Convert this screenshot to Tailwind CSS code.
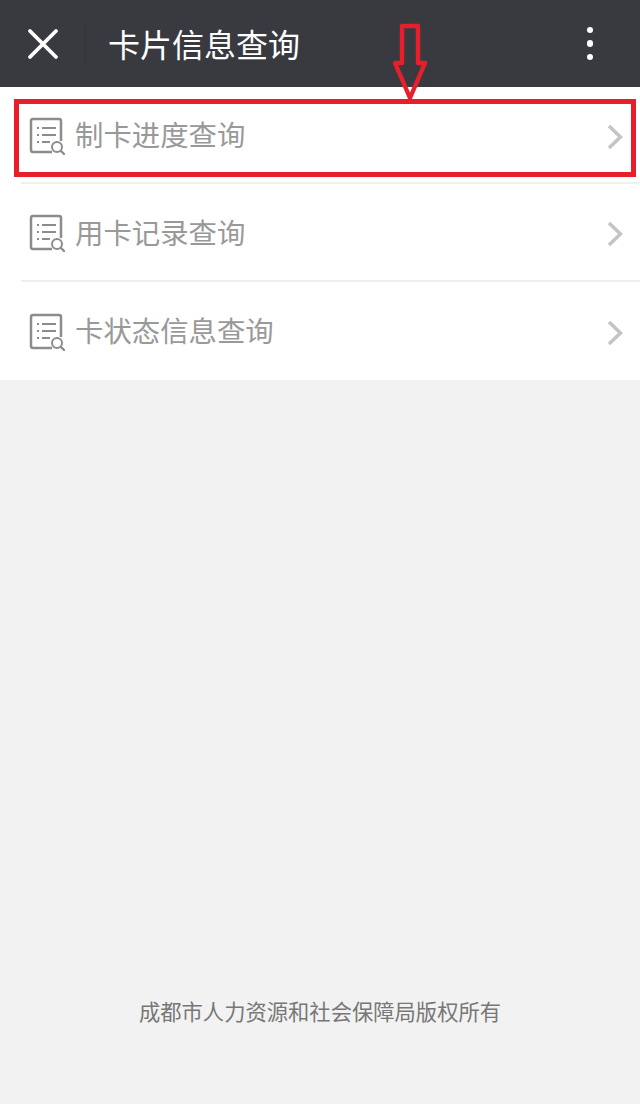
<!DOCTYPE html>
<html lang="zh-CN">
<head>
	<meta charset="UTF-8" />
	<title>卡片信息查询</title>
	<script src="https://cdn.jsdelivr.net/npm/@tailwindcss/browser@4"></script>
</head>
<body class="bg-[#f2f2f2] font-['Noto_Sans_CJK_SC',sans-serif]">
	<div class="relative w-[640px] h-[1104px] flex flex-col overflow-hidden">
		<!-- title bar -->
		<div class="h-[87px] bg-[#393a3f] flex items-center shrink-0">
			<div class="w-[86px] h-[44px] flex items-center justify-center border-r border-[#343539]">
				<svg width="32" height="32" viewBox="0 0 32 32" fill="none" stroke="#ffffff" stroke-width="3.8" stroke-linecap="round">
					<path d="M3 3 L29 29 M29 3 L3 29" />
				</svg>
			</div>
			<div class="ml-[22px] mb-[2px] text-[32px] leading-none text-white">卡片信息查询</div>
			<div class="ml-auto mr-[47px] flex flex-col gap-[7px]">
				<span class="block w-[6.5px] h-[6.5px] rounded-full bg-white"></span>
				<span class="block w-[6.5px] h-[6.5px] rounded-full bg-white"></span>
				<span class="block w-[6.5px] h-[6.5px] rounded-full bg-white"></span>
			</div>
		</div>

		<!-- menu -->
		<div class="bg-white pl-[21px] shrink-0">
			<div class="h-[97px] flex items-center border-b-2 border-[#f0f0ea]">
				<svg class="ml-[8px] mt-[2px]" width="36" height="38" viewBox="0 0 36 38" fill="none" stroke="#8c8c8c" stroke-width="2">
					<path d="M23 35 H4 Q2 35 2 33 V4 Q2 2 4 2 H30 Q32 2 32 4 V24" stroke-width="2.5" />
					<path d="M8 11 H10 M8 18 H10 M8 25 H10" />
					<path d="M13 11 H27 M13 18 H27 M13 25 H21" />
					<circle cx="28" cy="30" r="5" />
					<path d="M32 34 L35 37" stroke-width="2.4" stroke-linecap="round" />
				</svg>
				<span class="ml-[10px] text-[28.4px] leading-none text-[#999999]">制卡进度查询</span>
				<svg class="ml-auto mr-[17px] mt-[4px]" width="16" height="26" viewBox="0 0 16 26" fill="none" stroke="#c4c4c4" stroke-width="3.6">
					<path d="M2 2 L13.5 13 L2 24" />
				</svg>
			</div>
			<div class="h-[98px] flex items-center border-b-2 border-[#eeeeee]">
				<svg class="ml-[8px] mt-[2px]" width="36" height="38" viewBox="0 0 36 38" fill="none" stroke="#8c8c8c" stroke-width="2">
					<path d="M23 35 H4 Q2 35 2 33 V4 Q2 2 4 2 H30 Q32 2 32 4 V24" stroke-width="2.5" />
					<path d="M8 11 H10 M8 18 H10 M8 25 H10" />
					<path d="M13 11 H27 M13 18 H27 M13 25 H21" />
					<circle cx="28" cy="30" r="5" />
					<path d="M32 34 L35 37" stroke-width="2.4" stroke-linecap="round" />
				</svg>
				<span class="ml-[10px] text-[28.4px] leading-none text-[#999999]">用卡记录查询</span>
				<svg class="ml-auto mr-[17px] mt-[4px]" width="16" height="26" viewBox="0 0 16 26" fill="none" stroke="#c4c4c4" stroke-width="3.6">
					<path d="M2 2 L13.5 13 L2 24" />
				</svg>
			</div>
			<div class="h-[98px] flex items-center">
				<svg class="ml-[8px] mt-[2px]" width="36" height="38" viewBox="0 0 36 38" fill="none" stroke="#8c8c8c" stroke-width="2">
					<path d="M23 35 H4 Q2 35 2 33 V4 Q2 2 4 2 H30 Q32 2 32 4 V24" stroke-width="2.5" />
					<path d="M8 11 H10 M8 18 H10 M8 25 H10" />
					<path d="M13 11 H27 M13 18 H27 M13 25 H21" />
					<circle cx="28" cy="30" r="5" />
					<path d="M32 34 L35 37" stroke-width="2.4" stroke-linecap="round" />
				</svg>
				<span class="ml-[10px] mb-[2px] text-[28.4px] leading-none text-[#999999]">卡状态信息查询</span>
				<svg class="ml-auto mr-[17px] mt-[4px]" width="16" height="26" viewBox="0 0 16 26" fill="none" stroke="#c4c4c4" stroke-width="3.6">
					<path d="M2 2 L13.5 13 L2 24" />
				</svg>
			</div>
		</div>

		<!-- footer -->
		<div class="mt-auto mb-[80px] text-center text-[21.3px] leading-[26px] text-[#777777]">成都市人力资源和社会保障局版权所有</div>

		<!-- red annotation drawn over the screenshot -->
		<div class="absolute left-[14px] top-[99px] w-[622px] h-[78px] border-[5px] border-[#e81f2b]"></div>
		<svg class="absolute left-[390px] top-[22px]" width="40" height="82" viewBox="0 0 40 82" fill="none" stroke="#e81f2b" stroke-width="4.4">
			<path d="M12 4 H28 V41 H35 L20 76 L5 41 H12 Z" stroke-linejoin="round" />
		</svg>
	</div>
</body>
</html>
